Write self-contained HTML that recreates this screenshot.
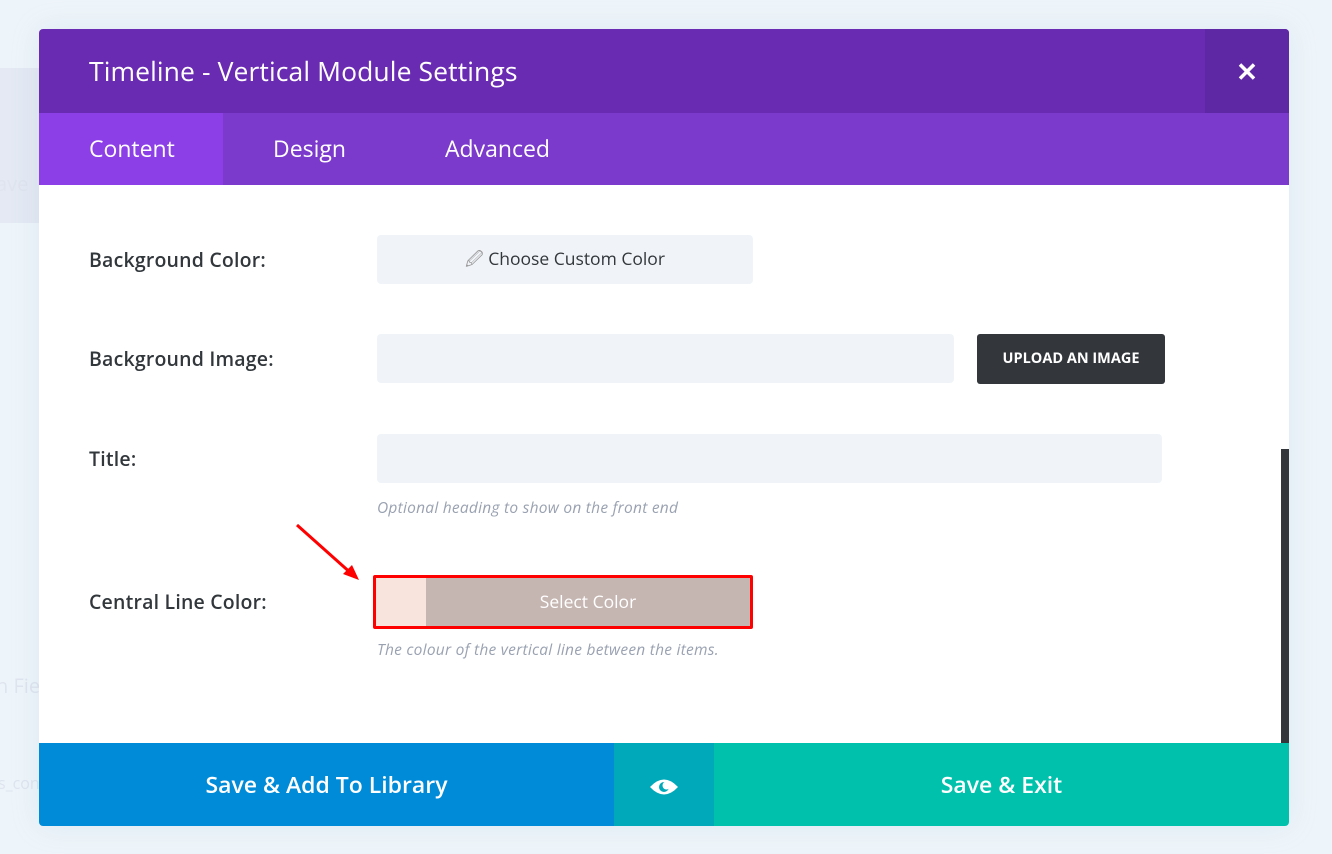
<!DOCTYPE html>
<html><head><style>
*{margin:0;padding:0;box-sizing:border-box}
body{width:1332px;height:854px;overflow:hidden;background:#eef5fa;font-family:"Open Sans","Liberation Sans",sans-serif;position:relative}
.bgpanel{position:absolute;left:0;top:68px;width:39px;height:155px;background:#e4e9f3}
.bgfaint{position:absolute;color:#dfe4ee;font-size:20px}
.modal{position:absolute;left:39px;top:29px;width:1250px;height:797px;background:#fff;border-radius:4px;overflow:hidden;box-shadow:0 0 30px rgba(120,160,200,.15)}
.hdr{height:84px;background:#6a2bb3;position:relative}
.hdr h1{position:absolute;left:50px;top:24px;font-weight:400;font-size:26.5px;color:#fff;letter-spacing:0.1px}
.close{position:absolute;right:0;top:0;width:84px;height:84px;background:#5e27a4;color:#fff;font-size:26px;text-align:center;line-height:84px;font-weight:700}
.tabs{height:72px;background:#7b3acc;position:relative}
.tab{position:absolute;top:0;height:72px;line-height:70px;color:#fff;font-size:23px}
.lbl{position:absolute;left:50px;font-size:19.5px;color:#32373c;font-weight:600;letter-spacing:0.2px}
.inp{position:absolute;background:#f0f3f8;border-radius:4px}
.hint{position:absolute;left:338px;font-size:15.5px;font-style:italic;color:#9aa2b1;letter-spacing:0.25px}
.foot{position:absolute;left:0;top:714px;height:83px;width:1250px}
.foot div{position:absolute;top:0;height:83px;color:#fff;font-size:23px;font-weight:600;text-align:center;line-height:83px}
</style></head><body>
<div class="bgpanel"></div>
<div class="bgfaint" style="left:-4px;top:170px">ave</div>
<div class="bgfaint" style="left:-4px;top:672px">n Fiel</div>
<div class="bgfaint" style="left:-2px;top:772px;font-size:16px">s_con</div>
<div class="modal">
 <div class="hdr"><h1>Timeline - Vertical Module Settings</h1><div class="close">✕</div></div>
 <div class="tabs">
  <div class="tab" style="left:0;width:184px;background:#8c3fe7;padding-left:50px">Content</div>
  <div class="tab" style="left:234px">Design</div>
  <div class="tab" style="left:406px">Advanced</div>
 </div>
 <div class="lbl" style="top:217px">Background Color:</div>
 <div class="inp" style="left:338px;top:206px;width:376px;height:49px;text-align:center;line-height:49px;font-size:17.5px;color:#32373c"><span style="color:#999">&#x1F589;</span> Choose Custom Color</div>
 <div class="lbl" style="top:316px">Background Image:</div>
 <div class="inp" style="left:338px;top:305px;width:577px;height:49px"></div>
 <div style="position:absolute;left:938px;top:305px;width:188px;height:50px;background:#33373b;border-radius:3px;color:#fff;font-size:14.5px;font-weight:700;text-align:center;line-height:50px">UPLOAD AN IMAGE</div>
 <div class="lbl" style="top:416px">Title:</div>
 <div class="inp" style="left:338px;top:405px;width:785px;height:49px"></div>
 <div class="hint" style="top:467px">Optional heading to show on the front end</div>
 <svg style="position:absolute;left:250px;top:490px" width="75" height="65"><line x1="8" y1="6" x2="64" y2="56" stroke="#f00" stroke-width="3"/><polygon points="70,61 54,55 63,46" fill="#f00"/></svg>
 <div class="lbl" style="top:559px">Central Line Color:</div>
 <div style="position:absolute;left:334px;top:546px;width:380px;height:54px;border:3px solid #f00;border-radius:2px;background:#c6b6b2">
  <div style="position:absolute;left:0;top:0;width:50px;height:48px;background:#f8e3dd"></div>
  <div style="position:absolute;left:50px;right:0;top:0;height:48px;line-height:48px;text-align:center;color:#fff;font-size:17.5px">Select Color</div>
 </div>
 <div class="hint" style="top:609px">The colour of the vertical line between the items.</div>
 <div style="position:absolute;left:1242px;top:420px;width:8px;height:294px;background:#33363a"></div>
 <div class="foot">
  <div style="left:0;width:575px;background:#008bd9">Save &amp; Add To Library</div>
  <div style="left:575px;width:100px;background:#00a9b9"><svg width="30" height="22" viewBox="0 0 30 22" style="vertical-align:middle"><path d="M1 11 Q15 -4 29 11 Q15 26 1 11Z" fill="#fff"/><circle cx="15" cy="11" r="5" fill="#00a9b9"/><circle cx="17.5" cy="9.5" r="4" fill="#fff"/></svg></div>
  <div style="left:675px;width:575px;background:#00c1ac">Save &amp; Exit</div>
 </div>
</div>
</body></html>
